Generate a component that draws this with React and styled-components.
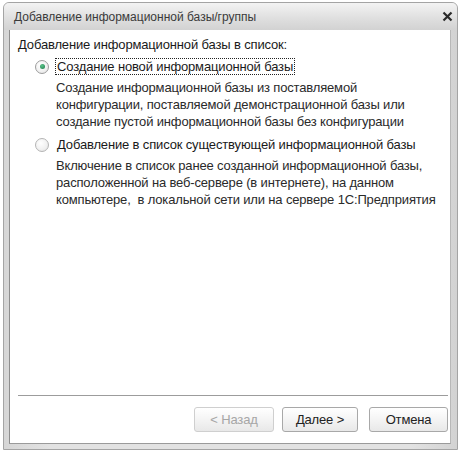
import React from "react";
import styled, { createGlobalStyle } from "styled-components";

const Global = createGlobalStyle`
  html, body {
    margin: 0;
    padding: 0;
    background: #ffffff;
  }
  body {
    font-family: "Liberation Sans", Arial, sans-serif;
    font-size: 12px;
    color: #222;
  }
`;

const Window = styled.div`
  box-sizing: border-box;
  margin: 2px 0 0 3px;
  width: 455px;
  height: 448px;
  display: flex;
  flex-direction: column;
  border: 1px solid #a4a4a4;
  border-radius: 6px 6px 0 0;
  background: linear-gradient(to right, #d6d6d6, #e2e2e2 10%, #e2e2e2 90%, #d2d2d2);
  overflow: hidden;
`;

const TitleBar = styled.div`
  height: 27px;
  flex: none;
  display: flex;
  align-items: center;
  justify-content: space-between;
  padding: 0 3px 0 10px;
  background: linear-gradient(#f3f3f3, #dedede 60%, #d2d2d2);
  color: #3a3a3a;
  font-size: 12px;
`;

const CloseBtn = styled.div`
  width: 14px;
  height: 14px;
  display: flex;
  align-items: center;
  justify-content: center;
`;

const Frame = styled.div`
  flex: 1;
  display: flex;
  padding: 0 6px 5px 5px;
`;

const Client = styled.div`
  flex: 1;
  display: flex;
  flex-direction: column;
  background: #fff;
  border-left: 1px solid #8e8e8e;
  border-right: 1px solid #b8b8b8;
  border-bottom: 1px solid #9a9a9a;
  padding: 7px 2px 11px 8px;
`;

const Heading = styled.div`
  font-size: 13px;
  letter-spacing: -0.15px;
  line-height: 16px;
  color: #1a1a1a;
`;

const Options = styled.div`
  flex: 1;
  display: flex;
  flex-direction: column;
  gap: 5px;
  padding: 4px 0 0 17px;
`;

const Option = styled.div`
  display: flex;
  flex-direction: column;
`;

const OptionRow = styled.label`
  display: flex;
  align-items: center;
  gap: 7px;
  height: 19px;
`;

const RadioCircle = styled.span`
  box-sizing: border-box;
  width: 14px;
  height: 14px;
  border-radius: 50%;
  border: 1px solid ${(p) => (p.$checked ? "#9c9c9c" : "#b4b4b4")};
  background: radial-gradient(circle at 40% 35%, #ffffff, #f0f0f0 60%, #dcdcdc);
  display: flex;
  align-items: center;
  justify-content: center;
  flex: none;
  &::after {
    content: "";
    display: ${(p) => (p.$checked ? "block" : "none")};
    width: 5px;
    height: 5px;
    border-radius: 50%;
    background: radial-gradient(circle at 40% 35%, #5ac48a, #1f7a4a);
  }
`;

const OptionLabel = styled.span`
  font-size: 13px;
  letter-spacing: -0.15px;
  line-height: 15px;
  padding: 0 1px;
  color: #1a1a1a;
  outline: ${(p) => (p.$focused ? "1px dotted #222" : "none")};
  outline-offset: 0;
`;

const Description = styled.div`
  margin-left: 21px;
  margin-top: 3px;
  font-size: 13px;
  letter-spacing: -0.16px;
  line-height: 17px;
  color: #2a2a2a;
  white-space: pre;
`;

const Separator = styled.div`
  height: 1px;
  background: #9c9c9c;
  margin: 0 0 11px 0;
`;

const Buttons = styled.div`
  display: flex;
  justify-content: flex-end;
  gap: 8px;
`;

const Button = styled.button`
  box-sizing: border-box;
  width: ${(p) => p.$w}px;
  height: 25px;
  margin-left: ${(p) => p.$gap || 0}px;
  border: 1px solid ${(p) => (p.disabled ? "#cfcfcf" : "#a8a8a8")};
  border-radius: 3px;
  background: linear-gradient(#ffffff, #f4f4f4 50%, #e8e8e8);
  font-family: "Liberation Sans", Arial, sans-serif;
  font-size: 13px;
  letter-spacing: -0.15px;
  color: ${(p) => (p.disabled ? "#a6a6a6" : "#222")};
  padding: 0;
`;

const options = [
  {
    label: "Создание новой информационной базы",
    text:
      "Создание информационной базы из поставляемой\nконфигурации, поставляемой демонстрационной базы или\nсоздание пустой информационной базы без конфигурации",
    checked: true,
  },
  {
    label: "Добавление в список существующей информационной базы",
    text:
      "Включение в список ранее созданной информационной базы,\nрасположенной на веб-сервере (в интернете), на данном\nкомпьютере,  в локальной сети или на сервере 1С:Предприятия",
    checked: false,
  },
];

export default function App() {
  return (
    <>
      <Global />
      <Window>
        <TitleBar>
          <span>Добавление информационной базы/группы</span>
          <CloseBtn>
            <svg width="11" height="11" viewBox="0 0 11 11">
              <path d="M1.5 1.5 L9.5 9.5 M9.5 1.5 L1.5 9.5" stroke="#2a2a2a" strokeWidth="2.2" />
            </svg>
          </CloseBtn>
        </TitleBar>
        <Frame>
          <Client>
            <Heading>Добавление информационной базы в список:</Heading>
            <Options>
              {options.map((o) => (
                <Option key={o.label}>
                  <OptionRow>
                    <RadioCircle $checked={o.checked} />
                    <OptionLabel $focused={o.checked}>{o.label}</OptionLabel>
                  </OptionRow>
                  <Description>{o.text}</Description>
                </Option>
              ))}
            </Options>
            <Separator />
            <Buttons>
              <Button $w={80} disabled>
                &lt; Назад
              </Button>
              <Button $w={76}>Далее &gt;</Button>
              <Button $w={79} $gap={3}>Отмена</Button>
            </Buttons>
          </Client>
        </Frame>
      </Window>
    </>
  );
}
